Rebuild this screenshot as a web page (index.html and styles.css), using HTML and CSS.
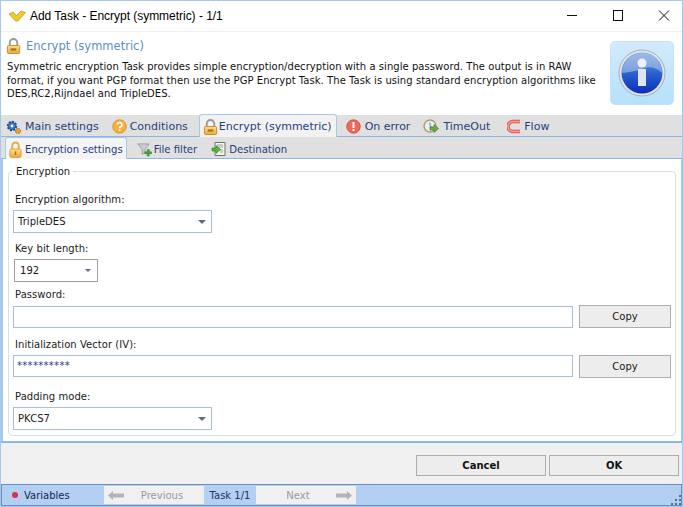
FILE: index.html
```
<!DOCTYPE html>
<html lang="en">
<head>
<meta charset="utf-8">
<title>Add Task - Encrypt (symmetric) - 1/1</title>
<link rel="stylesheet" href="styles.css">
</head>
<body>
<svg width="0" height="0" class="defs">
  <defs>
    <linearGradient id="gold" x1="0" y1="0" x2="0" y2="1"><stop offset="0" stop-color="#fbe08e"/><stop offset="1" stop-color="#efa93a"/></linearGradient>
    <linearGradient id="blue" x1="0" y1="0" x2="0" y2="1"><stop offset="0" stop-color="#7ea6e4"/><stop offset=".5" stop-color="#2a62d0"/><stop offset="1" stop-color="#0a2fb4"/></linearGradient>
    <symbol id="lock" viewBox="0 0 16 18">
      <path d="M4 9V5.500a4 4 0 0 1 8 0V9" fill="none" stroke="#9a9a9a" stroke-width="2"/>
      <rect x="1.500" y="8.500" width="13" height="8.500" rx="1" fill="url(#gold)" stroke="#c98a2e"/>
      <rect x="5" y="11.500" width="6" height="2.500" fill="#a8742a"/>
    </symbol>
    <symbol id="lock2" viewBox="0 0 14 18">
      <path d="M3.500 9V5a3.500 3.500 0 0 1 7 0V9" fill="none" stroke="#e9a93c" stroke-width="2"/>
      <rect x="1" y="8.500" width="12" height="9" rx="1.500" fill="url(#gold)" stroke="#e39a2c"/>
      <rect x="6.200" y="11" width="1.600" height="4" fill="#a8742a"/>
    </symbol>
  </defs>
</svg>
<div class="window">
  <header class="titlebar">
    <svg class="app-icon" width="17" height="12" viewBox="0 0 17 12"><path d="M0 4l4-2 3.500 3.500L12 1l4.500 1.500L9 11H6.500z" fill="#eccb2a" stroke="#a58a10" stroke-width=".6"/></svg>
    <span class="title">Add Task - Encrypt (symmetric) - 1/1</span>
    <div class="win-btns">
      <svg width="12" height="12" viewBox="0 0 12 12"><path d="M1 5.500h10" stroke="#111" fill="none"/></svg>
      <svg width="12" height="12" viewBox="0 0 12 12"><rect x="1.500" y=".5" width="9" height="10" stroke="#111" fill="none"/></svg>
      <svg width="12" height="12" viewBox="0 0 12 12"><path d="M1 .5l10 10M11 .5l-10 10" stroke="#111" fill="none"/></svg>
    </div>
  </header>
  <section class="intro">
    <div class="intro-text">
      <h1 class="intro-title"><svg width="15" height="18"><use href="#lock"/></svg>Encrypt (symmetric)</h1>
      <p class="intro-desc">Symmetric encryption Task provides simple encryption/decryption with a single password. The output is in RAW format, if you want PGP format then use the PGP Encrypt Task. The Task is using standard encryption algorithms like DES,RC2,Rijndael and TripleDES.</p>
    </div>
    <div class="info-tile">
      <svg width="48" height="48" viewBox="0 0 48 48">
        <circle cx="24" cy="24" r="23" fill="#dfe4ea" stroke="#a9adb3"/>
        <circle cx="24" cy="24" r="20.500" fill="url(#blue)"/>
        <path d="M4 24a20 20 0 0 1 40 0c-6-6-12-7-20-4-8 3-14 3-20 4z" fill="#b9cdea" opacity=".55"/>
        <circle cx="24" cy="14" r="4.500" fill="#eef2f8"/>
        <rect x="20" y="20" width="8" height="17" fill="#dfe6f2"/>
      </svg>
    </div>
  </section>
  <nav class="tabs">
    <span class="tab"><svg width="16" height="16" viewBox="0 0 16 16"><circle cx="6" cy="7" r="4.200" fill="#3c78c8" stroke="#204f90" stroke-width="2" stroke-dasharray="2 1.200"/><circle cx="6" cy="7" r="1.400" fill="#fff"/><circle cx="12" cy="12" r="2.600" fill="#e9a030" stroke="#b06a10" stroke-dasharray="1.500 1"/></svg>Main settings</span>
    <span class="tab"><svg width="15" height="15" viewBox="0 0 15 15"><circle cx="7.500" cy="7.500" r="6.700" fill="#f8b13c" stroke="#e3921f"/><path d="M5.200 5.600a2.400 2.200 0 1 1 3.400 2.100c-.8.4-1.100.8-1.100 1.500" fill="none" stroke="#fff" stroke-width="1.600"/><rect x="6.700" y="10.200" width="1.700" height="1.700" fill="#fff"/></svg>Conditions</span>
    <span class="tab active"><svg width="15" height="18"><use href="#lock"/></svg>Encrypt (symmetric)</span>
    <span class="tab tab-roomy"><svg width="15" height="15" viewBox="0 0 15 15"><circle cx="7.500" cy="7.500" r="6.700" fill="#ea6a5c" stroke="#d44f40"/><rect x="6.500" y="3" width="2" height="6" fill="#fff"/><rect x="6.500" y="10" width="2" height="2" fill="#fff"/></svg>On error</span>
    <span class="tab tab-roomy"><svg width="16" height="16" viewBox="0 0 16 16"><circle cx="7" cy="7" r="6" fill="#e8eef5" stroke="#b49a6a" stroke-width="1.400"/><path d="M7 3.500V7l2 1.500" fill="none" stroke="#6a7f9a"/><path d="M7 8h4V5.500l4.500 4-4.500 4V11H7z" fill="#6aae48" stroke="#3f7f2a" stroke-width=".7"/></svg>TimeOut</span>
    <span class="tab tab-flow"><svg width="15" height="15" viewBox="0 0 15 15"><path d="M13 2.500H6a4.500 4.500 0 0 0 0 10h7" fill="none" stroke="#e8504c" stroke-width="3.400"/><path d="M13 2.500H6a4.500 4.500 0 0 0 0 10h7" fill="none" stroke="#f8a0a0" stroke-width="1.400"/></svg>Flow</span>
  </nav>
  <main class="panel-wrap">
    <nav class="subtabs">
      <span class="subtab active"><svg width="13" height="17"><use href="#lock2"/></svg>Encryption settings</span>
      <span class="subtab subtab-filter"><svg width="15" height="15" viewBox="0 0 16 16"><path d="M1 2h12L8.500 8v4l-3 1V8z" fill="#c9ccd0" stroke="#85898e" stroke-width=".7"/><path d="M11 8h2v2.500h2.500v2H13V15h-2v-2.500H8.500v-2H11z" fill="#45a83a" stroke="#1f6d18" stroke-width=".5"/></svg>File filter</span>
      <span class="subtab subtab-dest"><svg width="15" height="14" viewBox="0 0 15 14"><path d="M4 .5h10v13H4z" fill="#f2f4ef" stroke="#6d7468"/><path d="M6 3h6M6 5h6M9 8h3M9 10h3" stroke="#9aa294"/><path d="M1 6h4V3.500L9.500 7.500 5 11.500V9H1z" fill="#5cb047" stroke="#2e7a20" stroke-width=".6"/></svg>Destination</span>
    </nav>
    <div class="panel">
      <fieldset class="group">
        <legend class="legend">Encryption</legend>
        <div class="field">
          <label class="lbl">Encryption algorithm:</label>
          <div class="combo combo-wide"><span>TripleDES</span><i class="arrow"></i></div>
        </div>
        <div class="field field-key">
          <label class="lbl">Key bit length:</label>
          <div class="combo combo-key"><span>192</span><i class="arrow arrow-sm"></i></div>
        </div>
        <div class="field field-pass">
          <label class="lbl">Password:</label>
          <div class="input-row">
            <div class="input"></div>
            <button class="btn btn-copy" type="button">Copy</button>
          </div>
        </div>
        <div class="field field-iv">
          <label class="lbl">Initialization Vector (IV):</label>
          <div class="input-row">
            <div class="input input-stars">**********</div>
            <button class="btn btn-copy" type="button">Copy</button>
          </div>
        </div>
        <div class="field field-pad">
          <label class="lbl">Padding mode:</label>
          <div class="combo combo-wide"><span>PKCS7</span><i class="arrow"></i></div>
        </div>
      </fieldset>
    </div>
  </main>
  <div class="actions">
    <button class="btn btn-main" type="button">Cancel</button>
    <button class="btn btn-main" type="button">OK</button>
  </div>
  <footer class="status">
    <span class="vars"><i class="dot"></i>Variables</span>
    <span class="nav-seg"><svg width="16" height="9" viewBox="0 0 16 9"><path d="M0 4.500L5 0v2.500h11v4H5V9z" fill="#b4b4b4"/></svg><b>Previous</b></span>
    <span class="task">Task 1/1</span>
    <span class="nav-seg nav-next"><b>Next</b><svg width="16" height="9" viewBox="0 0 16 9"><path d="M16 4.500L11 0v2.500H0v4h11V9z" fill="#b4b4b4"/></svg></span>
    <svg class="grip" width="11" height="11" viewBox="0 0 11 11"><path d="M9 1h2v2H9zM5 5h2v2H5zM9 5h2v2H9zM1 9h2v2H1zM5 9h2v2H5zM9 9h2v2H9z" fill="#5b6f8c"/></svg>
  </footer>
</div>
</body>
</html>
```
FILE: styles.css
```
* { box-sizing: border-box; }
html, body { margin: 0; padding: 0; }
body { width: 683px; height: 507px; overflow: hidden; background: #f0f0f0; font-family: "DejaVu Sans", sans-serif; font-size: 10px; color: #1a1a1a; }
.defs { position: absolute; }
.window { width: 683px; height: 507px; display: flex; flex-direction: column; border: 1px solid #a5c8ee; }
.titlebar { height: 31px; flex: none; background: #fff; display: flex; align-items: center; padding-left: 8px; border-bottom: 1px solid #f0f0f0; }
.app-icon { margin-right: 4px; }
.title { font-family: "Liberation Sans", sans-serif; font-size: 12px; letter-spacing: -.03px; color: #000; }
.win-btns { margin-left: auto; display: flex; gap: 34px; padding-right: 12px; }
.intro { height: 83px; flex: none; background: #fff; display: flex; justify-content: space-between; padding: 4px 8px 0 5px; }
.intro-title { margin: 0; display: flex; align-items: center; gap: 5px; font-size: 11.500px; font-weight: normal; color: #5b8fc4; height: 20px; }
.intro-desc { margin: 4px 0 0 1px; width: 592px; font-size: 10px; line-height: 13.500px; letter-spacing: .05px; color: #111; }
.info-tile { width: 64px; height: 64px; margin-top: 5px; border: 1px solid #c5e2f8; border-radius: 5px; background: linear-gradient(#d3ebfb, #b5e0fd); display: flex; align-items: center; justify-content: center; }
.tabs { height: 22px; flex: none; background: #e0e0e0; display: flex; align-items: flex-end; padding-left: 5px; border-bottom: 1px solid #8fb4e6; gap: 13px; }
.tab { display: flex; align-items: center; gap: 3px; height: 21px; padding-top: 2px; font-size: 11px; color: #24407e; white-space: nowrap; }
.tab.active { height: 23px; margin-bottom: -1px; margin-left: -2px; margin-right: -4px; padding: 1px 4px 0 3px; gap: 1px; background: #f2f2f2; border: 1px solid #a9c8ee; border-bottom: 0; border-radius: 3px 3px 0 0; }
.tab-roomy { gap: 4px; }
.tab-flow { margin-left: 4px; gap: 2px; }
.panel-wrap { flex: 1; min-height: 0; display: flex; flex-direction: column; border-bottom: 2px solid #8fb4e6; }
.subtabs { height: 22px; flex: none; background: #e0e0e0; display: flex; align-items: flex-end; padding-left: 4px; border-bottom: 1px solid #8fb4e6; gap: 10px; }
.subtab { display: flex; align-items: center; gap: 3px; height: 21px; padding-top: 3px; font-size: 10.100px; color: #24407e; white-space: nowrap; }
.subtab.active { height: 22px; margin-bottom: -1px; padding: 2px 3px 0 3px; background: #f4f4f4; border: 1px solid #a9c8ee; border-bottom: 0; border-radius: 3px 3px 0 0; }
.subtab-filter { gap: 2px; }
.subtab-dest { margin-left: 4px; }
.panel { flex: 1; min-height: 0; background: #fff; padding: 6px 5px 5px 5px; border-left: 2px solid #a5c8ee; border-right: 1px solid #a5c8ee; }
.group { height: 100%; margin: 0; padding: 15px 8px 0 4px; border: 1px solid #d5dfe8; border-radius: 4px; min-width: 0; letter-spacing: .05px; }
.legend { margin-left: 0; padding: 0 3px; font-size: 10px; color: #1a1a1a; line-height: 13px; }
.field { display: flex; flex-direction: column; }
.lbl { font-size: 10px; line-height: 13px; padding-left: 2px; margin-bottom: 4px; color: #1a1a1a; }
.field-key { margin-top: 9px; }
.field-pass { margin-top: 6px; }
.field-iv { margin-top: 10px; }
.field-iv .input-row { align-items: flex-start; }
.field-pad { margin-top: 12px; }
.combo { height: 23px; display: flex; align-items: center; justify-content: space-between; background: #fff; border: 1px solid #a9bfdc; padding: 0 4px; font-size: 10px; color: #1a1a1a; }
.combo-wide { width: 199px; }
.combo-key { width: 84px; margin-left: 1px; border-color: #a0a0a0; padding-left: 5px; }
.arrow { width: 0; height: 0; border-left: 4px solid transparent; border-right: 4px solid transparent; border-top: 4px solid #5c6c84; margin-right: 1px; }
.arrow-sm { border-left-width: 3px; border-right-width: 3px; border-top-width: 3px; margin-right: 2px; }
.input-row { display: flex; gap: 6px; align-items: flex-end; }
.input { flex: none; width: 560px; height: 22px; background: #fff; border: 1px solid #a9bfdc; font-size: 10px; padding: 0 3px; color: #24407e; line-height: 18px; }
.input-stars { padding-left: 3px; letter-spacing: .3px; line-height: 19px; }
.btn { font-family: inherit; font-size: 10px; color: #1a1a1a; background: #ededed; border: 1px solid #adadad; padding: 0; }
.btn-copy { flex: none; width: 92px; height: 23px; }
.actions { height: 41px; flex: none; background: #f0f0f0; display: flex; justify-content: flex-end; gap: 3px; padding: 12px 3px 0 0; }
.btn-main { width: 130px; height: 21px; font-weight: bold; color: #111; }
.status { height: 22px; flex: none; background: #b3d0f2; border: 1px solid #6c8ebf; display: flex; align-items: center; font-size: 10px; color: #1d2f63; padding: 2px 0; position: relative; }
.vars { width: 102px; display: flex; align-items: center; padding-left: 10px; gap: 6px; color: #17244e; }
.dot { width: 6px; height: 6px; border-radius: 50%; background: #d6334a; }
.nav-seg { width: 100px; height: 18px; background: #f0f0f0; display: flex; align-items: center; padding: 0 4px; color: #9a9a9a; }
.nav-seg b { font-weight: normal; flex: 1; text-align: center; }
.task { width: 52px; text-align: center; color: #1d2f63; }
.grip { position: absolute; right: 0; bottom: 0; }
```
